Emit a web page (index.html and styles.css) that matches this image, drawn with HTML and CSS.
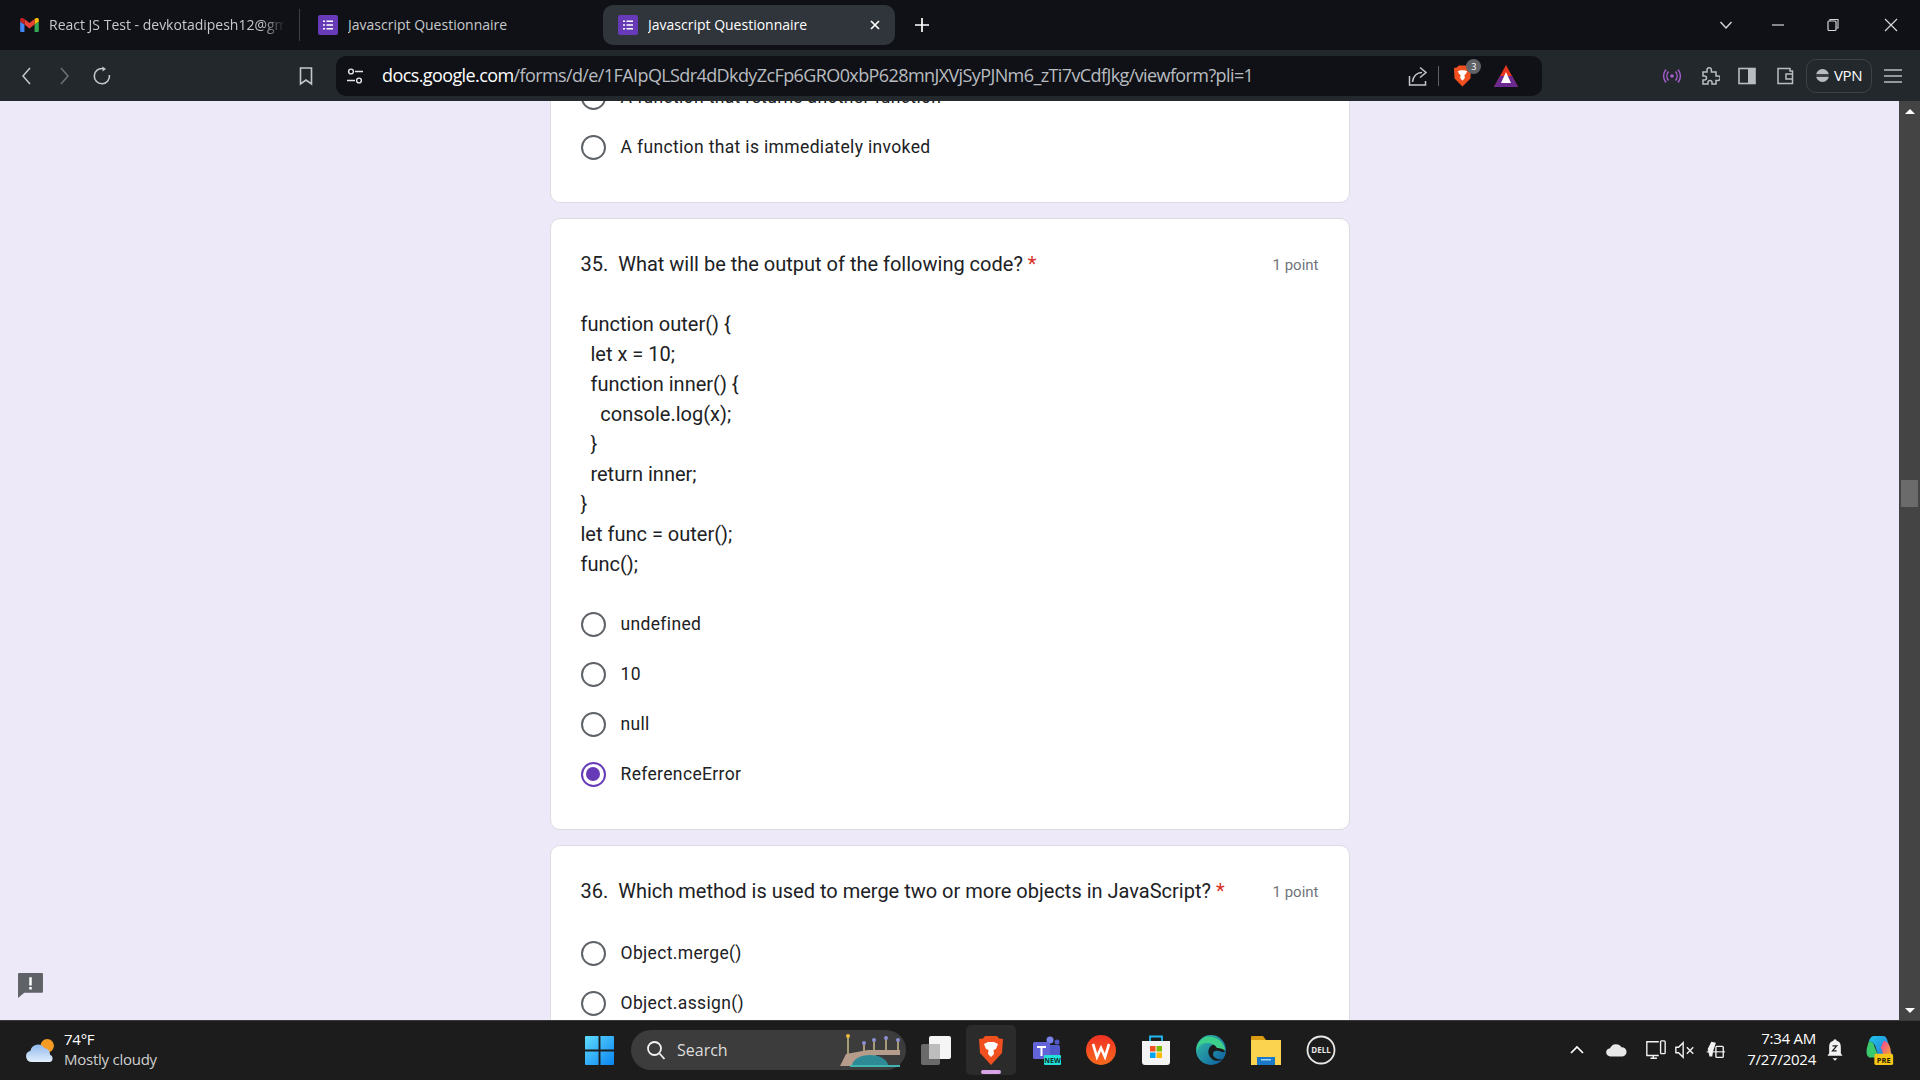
FILE: index.html
```html
<!DOCTYPE html>
<html lang="en">
<head>
    <meta charset="UTF-8">
    <title>Javascript Questionnaire</title>
    <link rel="stylesheet" href="styles.css">
</head>
<body>
    <div class="tab-strip">
        <div class="tab tab-first">
            <svg class="tab-icon gmail" viewBox="0 0 24 18"><path d="M1.6 18H5.5V8.5L0 4.4V16.4C0 17.3.7 18 1.6 18Z" fill="#4285f4"/><path d="M18.5 18h3.9c.9 0 1.6-.7 1.6-1.6V4.4l-5.5 4.1z" fill="#34a853"/><path d="M18.5 1.4v7.1L24 4.4V2.2c0-2-2.3-3.2-3.9-2z" fill="#fbbc04"/><path d="M5.5 8.5V1.4L12 6.3l6.5-4.9v7.1L12 13.4z" fill="#ea4335"/><path d="M0 2.2v2.2l5.5 4.1V1.4L3.9.2C2.3-1 0 .2 0 2.2z" fill="#c5221f"/></svg>
            <span class="tab-title fade">React JS Test - devkotadipesh12@gmail.com</span>
        </div>
        <div class="tab tab-second">
            <svg class="tab-icon" viewBox="0 0 20 20"><rect width="20" height="20" rx="2" fill="#673ab7"/><path d="M5 5.5h2v1.6H5zM8.5 5.5H15v1.6H8.5zM5 9.2h2v1.6H5zM8.5 9.2H15v1.6H8.5zM5 12.9h2v1.6H5zM8.5 12.9H15v1.6H8.5z" fill="#fff"/></svg>
            <span class="tab-title">Javascript Questionnaire</span>
        </div>
        <div class="tab tab-active">
            <svg class="tab-icon" viewBox="0 0 20 20"><rect width="20" height="20" rx="2" fill="#673ab7"/><path d="M5 5.5h2v1.6H5zM8.5 5.5H15v1.6H8.5zM5 9.2h2v1.6H5zM8.5 9.2H15v1.6H8.5zM5 12.9h2v1.6H5zM8.5 12.9H15v1.6H8.5z" fill="#fff"/></svg>
            <span class="tab-title">Javascript Questionnaire</span>
            <svg class="tab-close" viewBox="0 0 12 12"><path d="M2 2l8 8M10 2l-8 8" stroke="#fff" stroke-width="1.7"/></svg>
        </div>
        <svg class="new-tab" viewBox="0 0 14 14"><path d="M7 0v14M0 7h14" stroke="#fff" stroke-width="1.7"/></svg>
        <div class="window-controls">
            <svg class="win-btn win-chevron" viewBox="0 0 14 14"><path d="M1.5 4l5.5 6 5.5-6" fill="none" stroke="#d5d7d9" stroke-width="1.4"/></svg>
            <svg class="win-btn win-min" viewBox="0 0 14 14"><path d="M1 7h12" stroke="#d5d7d9" stroke-width="1.2"/></svg>
            <svg class="win-btn win-restore" viewBox="0 0 14 14"><path d="M4 3V1.5h8V10h-1.6" fill="none" stroke="#d5d7d9" stroke-width="1.1"/><rect x="2" y="3" width="8" height="9.5" rx="1" fill="none" stroke="#d5d7d9" stroke-width="1.2"/></svg>
            <svg class="win-btn win-close" viewBox="0 0 14 14"><path d="M1 1l12 12M13 1L1 13" stroke="#d5d7d9" stroke-width="1.2"/></svg>
        </div>
    </div>

    <div class="toolbar">
        <svg class="tool-icon nav-back" viewBox="0 0 20 20"><path d="M13 2l-7 8 7 8" fill="none" stroke="#c4c7ca" stroke-width="1.5"/></svg>
        <svg class="tool-icon nav-forward" viewBox="0 0 20 20"><path d="M7 2l7 8-7 8" fill="none" stroke="#6d7276" stroke-width="1.5"/></svg>
        <svg class="tool-icon nav-reload" viewBox="0 0 20 20"><path d="M11 2.600A7.600 7.600 0 1 0 17.400 9" fill="none" stroke="#c4c7ca" stroke-width="1.6"/><path d="M10.500 0.500l3.500 2.500-3.500 2.500z" fill="#c4c7ca"/></svg>
        <svg class="tool-icon nav-bookmark" viewBox="0 0 20 20"><path d="M4.5 2h11v16L10 14l-5.5 4z" fill="none" stroke="#c4c7ca" stroke-width="1.6"/></svg>
        <div class="address-bar">
            <svg class="site-icon" viewBox="0 0 18 18"><circle cx="5" cy="4.5" r="2.4" fill="none" stroke="#e4e5e7" stroke-width="1.4"/><path d="M9 4.5h8M1 13.5h8" stroke="#e4e5e7" stroke-width="1.4"/><circle cx="13" cy="13.5" r="2.4" fill="none" stroke="#e4e5e7" stroke-width="1.4"/></svg>
            <span class="url"><span class="url-host">docs.google.com</span>/forms/d/e/1FAIpQLSdr4dDkdyZcFp6GRO0xbP628mnJXVjSyPJNm6_zTi7vCdfJkg/viewform?pli=1</span>
            <svg class="share-icon" viewBox="0 0 20 20"><path d="M1.500 10v9h16v-4" fill="none" stroke="#c4c7ca" stroke-width="1.500"/><path d="M4.500 16c.5-6 4.500-9.500 9.500-9.500M12 1.500l6 5-6 5" fill="none" stroke="#c4c7ca" stroke-width="1.500"/></svg>
            <span class="bar-divider"></span>
            <div class="shield">
                <svg class="shield-icon" viewBox="0 0 20 24"><path d="M6 1h8l2 2 3 .5-.6 11L10 23 1.600 14.500 1 3.500 4 3z" fill="#f0501f"/><path d="M5 7l3-1h4l3 1-1.500 3-1.500 1 .5 3L10 17l-2.500-3 .5-3-1.500-1z" fill="#fff"/></svg>
                <span class="shield-badge">3</span>
            </div>
            <svg class="rewards-icon" viewBox="0 0 24 22"><path d="M12 0l12 22H0z" fill="#e8351f"/><path d="M6 11h12l6 11H0z" fill="#6b2a91"/><path d="M12 7l5 11H7z" fill="#fff"/></svg>
        </div>
        <svg class="tool-icon cast-icon" viewBox="0 0 20 20"><circle cx="10" cy="10" r="1.800" fill="#a95fd0"/><path d="M6.500 5.500a7 7 0 0 0 0 9M13.500 5.500a7 7 0 0 1 0 9M4 3.500a10 10 0 0 0 0 13M16 3.500a10 10 0 0 1 0 13" fill="none" stroke="#a95fd0" stroke-width="1.400"/></svg>
        <svg class="tool-icon puzzle-icon" viewBox="0 0 20 20"><path d="M3 6h4V4a2.200 2.200 0 0 1 4.400 0v2H16v4h2a2.200 2.200 0 0 1 0 4.400h-2V18h-4v-1.500a2 2 0 0 0-4 0V18H3v-4h1.500a2 2 0 0 0 0-4H3z" fill="none" stroke="#b9bdc0" stroke-width="1.500"/></svg>
        <svg class="tool-icon panel-icon" viewBox="0 0 20 20"><rect x="2" y="2.500" width="16" height="15" fill="none" stroke="#b9bdc0" stroke-width="1.600"/><rect x="11" y="3" width="7" height="14" fill="#b9bdc0"/></svg>
        <svg class="tool-icon wallet-icon" viewBox="0 0 20 20"><path d="M15 5V2.500H3v15h14.500V5z" fill="none" stroke="#b9bdc0" stroke-width="1.500"/><path d="M18 8h-7v5h7" fill="none" stroke="#b9bdc0" stroke-width="1.500"/></svg>
        <div class="vpn-pill"><span class="vpn-dot"></span><span class="vpn-label">VPN</span></div>
        <svg class="tool-icon menu-icon" viewBox="0 0 20 20"><path d="M1 4h18M1 10h18M1 16h18" stroke="#b9bdc0" stroke-width="1.500"/></svg>
    </div>

    <div class="viewport">
        <div class="page">
            <div class="form">
                <div class="card">
                    <div class="options">
                        <div class="option"><span class="radio"></span><span>A function that returns another function</span></div>
                        <div class="option"><span class="radio"></span><span>A function that is immediately invoked</span></div>
                    </div>
                </div>
                <div class="card card-question">
                    <div class="question">
                        <div class="question-title">35.&nbsp; What will be the output of the following code? <span class="required">*</span></div>
                        <div class="points">1 point</div>
                    </div>
                    <pre class="code">function outer() {
  let x = 10;
  function inner() {
    console.log(x);
  }
  return inner;
}
let func = outer();
func();</pre>
                    <div class="options">
                        <div class="option"><span class="radio"></span><span>undefined</span></div>
                        <div class="option"><span class="radio"></span><span>10</span></div>
                        <div class="option"><span class="radio"></span><span>null</span></div>
                        <div class="option"><span class="radio radio-checked"></span><span>ReferenceError</span></div>
                    </div>
                </div>
                <div class="card card-question">
                    <div class="question">
                        <div class="question-title">36.&nbsp; Which method is used to merge two or more objects in JavaScript? <span class="required">*</span></div>
                        <div class="points">1 point</div>
                    </div>
                    <div class="options">
                        <div class="option"><span class="radio"></span><span>Object.merge()</span></div>
                        <div class="option"><span class="radio"></span><span>Object.assign()</span></div>
                    </div>
                </div>
            </div>
            <svg class="feedback" viewBox="0 0 26 26"><path d="M2 1h22a1 1 0 0 1 1 1v17a1 1 0 0 1-1 1H7l-6 5V2a1 1 0 0 1 1-1z" fill="#5f6368"/><path d="M11.800 5h2.400v8h-2.400zM11.800 14.500h2.400v2.400h-2.400z" fill="#fff"/></svg>
        </div>
        <div class="scrollbar">
            <span class="scroll-arrow scroll-up"></span>
            <span class="scroll-thumb"></span>
            <span class="scroll-arrow scroll-down"></span>
        </div>
    </div>

    <div class="taskbar">
        <div class="weather">
            <svg class="weather-icon" viewBox="0 0 32 26"><defs><linearGradient id="cloud" x1="0" y1="0" x2="0" y2="1"><stop offset="0" stop-color="#8fb8ee"/><stop offset="1" stop-color="#e3effb"/></linearGradient></defs><circle cx="23" cy="8" r="7" fill="#f59a23"/><path d="M7 25a6 6 0 0 1-1.500-11.800A8 8 0 0 1 20 10.500a6.500 6.500 0 0 1 6 7A4 4 0 0 1 26 25z" fill="url(#cloud)"/></svg>
            <div class="weather-text">
                <div>74°F</div>
                <div class="weather-desc">Mostly cloudy</div>
            </div>
        </div>
        <svg class="start-icon" viewBox="0 0 30 30"><defs><linearGradient id="win" x1="0" y1="0" x2="1" y2="1"><stop offset="0" stop-color="#5fdcff"/><stop offset="1" stop-color="#0a84f0"/></linearGradient></defs><path d="M0 1a1 1 0 0 1 1-1h13v14H0zM16 0h13a1 1 0 0 1 1 1v13H16zM0 16h14v14H1a1 1 0 0 1-1-1zM16 16h14v13a1 1 0 0 1-1 1H16z" fill="url(#win)"/></svg>
        <div class="search-box">
            <svg class="search-icon" viewBox="0 0 20 20"><circle cx="8.500" cy="8.500" r="6.500" fill="none" stroke="#f2f2f2" stroke-width="1.800"/><path d="M13.500 13.500l5 5.500" stroke="#f2f2f2" stroke-width="1.800"/></svg>
            <span class="search-label">Search</span>
            <svg class="search-art" viewBox="0 0 66 36"><path d="M10 4v18M26 12v8M36 9v11M48 7v13M60 9v11" stroke="#c9b98a" stroke-width="1.500"/><circle cx="10" cy="4" r="2" fill="#e8b93a"/><circle cx="26" cy="11" r="2" fill="#8d8fd6"/><circle cx="36" cy="8" r="2" fill="#8d8fd6"/><circle cx="48" cy="6" r="2" fill="#8d8fd6"/><circle cx="60" cy="8" r="2" fill="#8d8fd6"/><path d="M2 34l6-12 22-4h32v5H38l-8 11z" fill="#b69c8a"/><path d="M14 34a18 11 0 0 1 36 0z" fill="#2e8b96"/><path d="M12 33h50v2H12z" fill="#3fb6b2"/></svg>
        </div>
        <svg class="taskview-icon" viewBox="0 0 30 30"><rect x="0" y="9" width="19" height="21" rx="2" fill="#6a6a6a"/><rect x="8" y="1" width="22" height="23" rx="2" fill="#f5f5f5"/><rect x="8" y="9" width="11" height="15" fill="#bdbdbd"/></svg>
        <div class="app app-active">
            <svg class="app-icon" viewBox="0 0 26 30"><path d="M7 1h12l2 2.500 4 .5-1 14L13 30 2 18 1 4l4-.5z" fill="#f0501f"/><path d="M6 9l4-2h6l4 2-2 5-2.500 1 .5 4L13 22l-3-3 .5-4L8 14z" fill="#fff"/></svg>
            <span class="app-indicator"></span>
        </div>
        <div class="app">
            <svg class="app-icon" viewBox="0 0 30 30"><circle cx="19" cy="5" r="3.500" fill="#7b83eb"/><circle cx="26" cy="7" r="2.500" fill="#5059c9"/><rect x="15" y="10" width="14" height="14" rx="2" fill="#5059c9"/><rect x="2" y="7" width="17" height="17" rx="1.500" fill="#6264d8"/><path d="M6 11h9v2h-3.500v8h-2v-8H6z" fill="#fff"/><rect x="13" y="20" width="17" height="10" rx="1" fill="#22dfd8"/><text class="icon-tag" x="21.500" y="28.300">NEW</text></svg>
        </div>
        <div class="app">
            <svg class="app-icon" viewBox="0 0 30 30"><defs><linearGradient id="wps" x1="0" y1="0" x2="0" y2="1"><stop offset="0" stop-color="#ef3124"/><stop offset="1" stop-color="#f86a1c"/></linearGradient></defs><circle cx="15" cy="15" r="15" fill="url(#wps)"/><path d="M7 9l4 13 4-9 4 9 4-13" fill="none" stroke="#fff" stroke-width="2.600"/></svg>
        </div>
        <div class="app">
            <svg class="app-icon" viewBox="0 0 30 30"><path d="M9 6V1.500h12V6" fill="none" stroke="#22b8f0" stroke-width="1.800"/><path d="M1 6h28v21a3 3 0 0 1-3 3H4a3 3 0 0 1-3-3z" fill="#f4f4f4"/><rect x="9" y="11" width="5.500" height="5.500" fill="#f25022"/><rect x="15.500" y="11" width="5.500" height="5.500" fill="#7fba00"/><rect x="9" y="17.500" width="5.500" height="5.500" fill="#00a4ef"/><rect x="15.500" y="17.500" width="5.500" height="5.500" fill="#ffb900"/></svg>
        </div>
        <div class="app">
            <svg class="app-icon" viewBox="0 0 30 30"><defs><linearGradient id="edge" x1="0" y1="0" x2="1" y2="1"><stop offset="0" stop-color="#35c1a3"/><stop offset="1" stop-color="#0c59a4"/></linearGradient></defs><circle cx="15" cy="15" r="15" fill="url(#edge)"/><path d="M29 16c0-5-5-8-10-7-5 1-8 6-6 11s8 8 14 4c-5 1-10-1-10-5 0-3 3-4 6-3s5 2 6 0z" fill="#1b1b1b"/><path d="M10 2C4 4 0 10 1 16c1-5 5-8 9-8s9 1 11 5c3 0 7 1 8 3 1-7-8-16-19-14z" fill="#3dd08a"/></svg>
        </div>
        <div class="app">
            <svg class="app-icon" viewBox="0 0 30 30"><path d="M0 2a1 1 0 0 1 1-1h11l3 4h-15z" fill="#d99c12"/><rect x="0" y="5" width="30" height="25" fill="#fbd34e"/><rect x="6" y="22" width="18" height="8" fill="#1a78c8"/><rect x="10" y="24" width="10" height="1.500" fill="#9fd4f5"/></svg>
        </div>
        <div class="app">
            <svg class="app-icon" viewBox="0 0 30 30"><circle cx="15" cy="15" r="13.500" fill="none" stroke="#e8e8e8" stroke-width="1.800"/><text class="dell-text" x="15" y="18">DELL</text></svg>
        </div>
        <div class="tray">
            <svg class="tray-icon tray-chevron" viewBox="0 0 16 16"><path d="M2 11l6-6 6 6" fill="none" stroke="#fff" stroke-width="1.700"/></svg>
            <svg class="tray-icon tray-cloud" viewBox="0 0 24 24"><path d="M6 19a4.500 4.500 0 0 1-.5-9A7 7 0 0 1 18 9a5 5 0 0 1 1 10z" fill="#e8e8e8"/></svg>
            <svg class="tray-icon tray-monitor" viewBox="0 0 24 24"><path d="M15 3H2v15h13M6 21h7M9 18v3" fill="none" stroke="#f2f2f2" stroke-width="1.500"/><rect x="17" y="2" width="5" height="14" rx="1" fill="none" stroke="#f2f2f2" stroke-width="1.500"/></svg>
            <svg class="tray-icon tray-sound" viewBox="0 0 24 24"><path d="M2 9h3l5-5v16l-5-5H2z" fill="none" stroke="#f2f2f2" stroke-width="1.500"/><path d="M14 9l7 7M21 9l-7 7" stroke="#f2f2f2" stroke-width="1.500"/></svg>
            <svg class="tray-icon tray-pen" viewBox="0 0 24 24"><path d="M8 3l-4 8 2 8h3l1-6 3-9z" fill="#f2f2f2"/><rect x="13" y="8" width="8" height="12" rx="1" fill="none" stroke="#f2f2f2" stroke-width="1.500"/><path d="M3 14h20" stroke="#f2f2f2" stroke-width="1.200"/></svg>
            <div class="clock">
                <div>7:34 AM</div>
                <div>7/27/2024</div>
            </div>
            <svg class="tray-icon tray-bell" viewBox="0 0 24 28"><path d="M12 1a2 2 0 0 1 2 2c4 1 5 4 5 8v7l2 3H3l2-3v-7c0-4 1-7 5-8a2 2 0 0 1 2-2z" fill="#f2f2f2"/><path d="M9 24h6l-3 3z" fill="#f2f2f2"/><path d="M9 9h5l-5 6h5" fill="none" stroke="#1c1c1c" stroke-width="1.500"/></svg>
            <svg class="copilot-icon" viewBox="0 0 32 32"><defs><linearGradient id="cop-a" x1="0" y1="0" x2="1" y2="1"><stop offset="0" stop-color="#1ec8e8"/><stop offset="1" stop-color="#2a6fd8"/></linearGradient><linearGradient id="cop-b" x1="0" y1="0" x2="1" y2="1"><stop offset="0" stop-color="#f03fa0"/><stop offset="1" stop-color="#f7a72e"/></linearGradient></defs><path d="M9 1h10c3 0 4 2 5 5l5 16H14L11 12c-1-3-4-5-7-5 1-3 3-6 5-6z" fill="url(#cop-a)"/><path d="M4 7c3 0 6 2 6 5l4 10c-2 2-5 2-8 2C2 24 1 19 2 14z" fill="#3ac96c"/><path d="M20 6c4 1 6 4 7 8l1 8h-8l-3-9z" fill="url(#cop-b)"/><rect x="10" y="20" width="20" height="12" rx="2" fill="#f5c518"/><text class="copilot-tag" x="20" y="29.500">PRE</text></svg>
        </div>
    </div>
</body>
</html>
```

FILE: styles.css
```css
* {
    box-sizing: border-box;
}
html, body {
    margin: 0;
    height: 100%;
    overflow: hidden;
}
body {
    display: flex;
    flex-direction: column;
    height: 100vh;
    font-family: "Open Sans", "Liberation Sans", sans-serif;
}
svg {
    display: block;
    flex: none;
}

/* tab strip */
.tab-strip {
    display: flex;
    align-items: center;
    height: 50px;
    padding-top: 5px;
    padding-bottom: 5px;
    background-color: #0f1116;
    color: #c7c9cc;
    font-size: 14px;
}
.tab {
    display: flex;
    align-items: center;
    height: 40px;
    overflow: hidden;
}
.tab-first {
    width: 300px;
    padding-left: 20px;
    border-right: 1px solid #3c4043;
    height: 32px;
}
.tab-second {
    width: 303px;
    padding-left: 18px;
}
.tab-active {
    width: 292px;
    padding-left: 15px;
    padding-right: 14px;
    border-radius: 10px;
    background-color: #2f353b;
    color: #fff;
}
.tab-icon {
    width: 20px;
    height: 20px;
    margin-right: 10px;
}
.gmail {
    width: 19px;
    height: 14px;
}
.tab-title {
    margin-bottom: 2px;
    white-space: nowrap;
    overflow: hidden;
}
.fade {
    width: 236px;
    -webkit-mask-image: linear-gradient(to right, #000 90%, transparent);
    mask-image: linear-gradient(to right, #000 90%, transparent);
}
.tab-close {
    width: 12px;
    height: 12px;
    margin-left: auto;
}
.new-tab {
    width: 14px;
    height: 14px;
    margin-left: 20px;
}
.window-controls {
    display: flex;
    align-items: center;
    margin-left: auto;
}
.win-btn {
    width: 14px;
    height: 14px;
}
.win-chevron {
    margin-right: 38px;
}
.win-min {
    margin-right: 41px;
}
.win-restore {
    margin-right: 44px;
}
.win-close {
    margin-right: 22px;
}

/* toolbar */
.toolbar {
    display: flex;
    align-items: center;
    height: 51px;
    padding-left: 17px;
    background-color: #23282d;
}
.tool-icon {
    width: 20px;
    height: 20px;
}
.nav-forward {
    margin-left: 17px;
}
.nav-reload {
    margin-left: 18px;
}
.nav-bookmark {
    margin-left: 184px;
}
.address-bar {
    display: flex;
    align-items: center;
    width: 1206px;
    height: 40px;
    margin-left: 20px;
    padding-left: 10px;
    border-radius: 10px;
    background-color: #0f1116;
    color: #b9bcc0;
    font-size: 18px;
    letter-spacing: -0.6px;
}
.site-icon {
    width: 18px;
    height: 18px;
    margin-right: 18px;
}
.url {
    width: 1026px;
    margin-bottom: 2px;
    white-space: nowrap;
}
.url-host {
    color: #fff;
}
.share-icon {
    width: 20px;
    height: 20px;
    margin-right: 10px;
}
.bar-divider {
    width: 1px;
    height: 20px;
    background-color: #5f6368;
}
.shield {
    position: relative;
    margin-left: 14px;
}
.shield-icon {
    width: 19px;
    height: 24px;
}
.shield-badge {
    position: absolute;
    top: -5px;
    right: -9px;
    width: 15px;
    height: 15px;
    border-radius: 50%;
    background-color: #5f6368;
    color: #fff;
    font-size: 9px;
    line-height: 15px;
    text-align: center;
}
.rewards-icon {
    width: 24px;
    height: 22px;
    margin-left: 22px;
}
.cast-icon {
    margin-left: 120px;
}
.puzzle-icon {
    margin-left: 18px;
}
.panel-icon {
    margin-left: 17px;
}
.wallet-icon {
    margin-left: 18px;
}
.vpn-pill {
    display: flex;
    align-items: center;
    gap: 5px;
    width: 66px;
    height: 34px;
    margin-left: 11px;
    padding-left: 9px;
    border: 1px solid #3c4247;
    border-radius: 10px;
    color: #fff;
    font-size: 15px;
    letter-spacing: -0.4px;
}
.vpn-label {
    margin-bottom: 2px;
}
.vpn-dot {
    width: 13px;
    height: 13px;
    border-radius: 50%;
    background: linear-gradient(#b9bdc0 0 40%, #3c4247 40% 60%, #b9bdc0 60%);
}
.menu-icon {
    margin-left: 11px;
}

/* page area */
.viewport {
    display: flex;
    flex: 1;
    min-height: 0;
    background-color: #eee9f8;
}
.page {
    position: relative;
    flex: 1;
    overflow: hidden;
}
.form {
    display: flex;
    flex-direction: column;
    gap: 15px;
    width: 800px;
    margin: -30px auto 0;
    color: #202124;
    font-family: Roboto, "Liberation Sans", sans-serif;
}
.card {
    padding: 0 30px 30px;
    border: 1px solid #dadce0;
    border-radius: 10px;
    background-color: #fff;
}
.card-question {
    padding-top: 30px;
}
.question {
    display: flex;
    justify-content: space-between;
    height: 30px;
    font-size: 20px;
    line-height: 30px;
}
.required {
    color: #d93025;
}
.points {
    color: #70757a;
    font-size: 15px;
    line-height: 32px;
}
.code {
    margin: 30px 0 0;
    font-family: inherit;
    font-size: 20px;
    line-height: 30px;
}
.options {
    margin-top: 22px;
}
.code + .options {
    margin-top: 20px;
}
.card > .options:first-child {
    margin-top: 0;
}
.option {
    display: flex;
    align-items: center;
    gap: 15px;
    height: 50px;
    font-size: 17.5px;
    letter-spacing: 0.35px;
}
.radio {
    position: relative;
    width: 25px;
    height: 25px;
    border: 2.5px solid #5f6368;
    border-radius: 50%;
}
.radio-checked {
    border-color: #673ab7;
}
.radio-checked::after {
    content: '';
    position: absolute;
    top: 3px;
    left: 3px;
    width: 14px;
    height: 14px;
    border-radius: 50%;
    background-color: #673ab7;
}
.feedback {
    position: absolute;
    left: 17px;
    top: 871px;
    width: 27px;
    height: 27px;
}

/* scrollbar */
.scrollbar {
    display: flex;
    flex-direction: column;
    align-items: center;
    width: 21px;
    background-color: #444;
}
.scroll-arrow {
    width: 0;
    height: 0;
    border-left: 5px solid transparent;
    border-right: 5px solid transparent;
}
.scroll-up {
    margin-top: 8px;
    border-bottom: 5px solid #fff;
}
.scroll-thumb {
    width: 17px;
    height: 27px;
    margin-top: 366px;
    background-color: #6b6b6b;
}
.scroll-down {
    margin-top: auto;
    margin-bottom: 7px;
    border-top: 5px solid #fff;
}

/* taskbar */
.taskbar {
    display: flex;
    align-items: center;
    height: 60px;
    padding-left: 25px;
    padding-bottom: 1px;
    border-top: 1px solid #3a3a3a;
    background-color: #1c1c1c;
    color: #fff;
    font-family: "Open Sans", "Liberation Sans", sans-serif;
    font-size: 15px;
}
.weather {
    display: flex;
    align-items: center;
    gap: 8px;
    width: 560px;
}
.weather-icon {
    width: 31px;
    height: 25px;
}
.weather-text {
    margin-bottom: 2px;
    line-height: 20px;
    letter-spacing: -0.25px;
}
.weather-desc {
    color: #d0d0d0;
}
.start-icon {
    width: 29px;
    height: 29px;
}
.search-box {
    display: flex;
    align-items: center;
    width: 275px;
    height: 40px;
    margin-left: 17px;
    padding-left: 15px;
    padding-right: 2px;
    border-radius: 20px;
    background-color: #3c3c3c;
    color: #dcdcdc;
    font-size: 16px;
}
.search-icon {
    width: 20px;
    height: 20px;
    margin-right: 11px;
}
.search-art {
    width: 66px;
    height: 36px;
    margin-left: auto;
}
.taskview-icon {
    width: 30px;
    height: 30px;
    margin-left: 15px;
    margin-right: 15px;
}
.app {
    position: relative;
    display: flex;
    align-items: center;
    justify-content: center;
    width: 55px;
    height: 50px;
}
.app-active {
    width: 50px;
    margin-right: 2.5px;
    border-radius: 5px;
    background-color: #2b2b2b;
}
.app-icon {
    width: 30px;
    height: 30px;
}
.app-indicator {
    position: absolute;
    bottom: 1px;
    left: 15px;
    width: 20px;
    height: 4px;
    border-radius: 2px;
    background-color: #d7a5e6;
}
.icon-tag {
    font-size: 7px;
    font-weight: 700;
    fill: #10312f;
    text-anchor: middle;
}
.dell-text {
    font-size: 8px;
    font-weight: 700;
    fill: #e8e8e8;
    text-anchor: middle;
}
.tray {
    display: flex;
    align-items: center;
    margin-left: auto;
}
.tray-icon {
    width: 22px;
    height: 22px;
}
.tray-chevron {
    width: 16px;
    height: 16px;
    margin-right: 1px;
}
.tray-cloud {
    margin-left: 19px;
}
.tray-monitor {
    margin-left: 18px;
}
.tray-sound {
    margin-left: 7px;
}
.tray-pen {
    margin-left: 8px;
}
.clock {
    width: 85px;
    margin-bottom: 2px;
    margin-left: 5px;
    line-height: 21px;
    text-align: right;
    letter-spacing: -0.25px;
}
.tray-bell {
    width: 20px;
    height: 24px;
    margin-left: 9px;
}
.copilot-icon {
    width: 30px;
    height: 30px;
    margin-left: 20px;
    margin-right: 25px;
}
.copilot-tag {
    font-size: 8px;
    font-weight: 700;
    fill: #2a2000;
    text-anchor: middle;
}
```
